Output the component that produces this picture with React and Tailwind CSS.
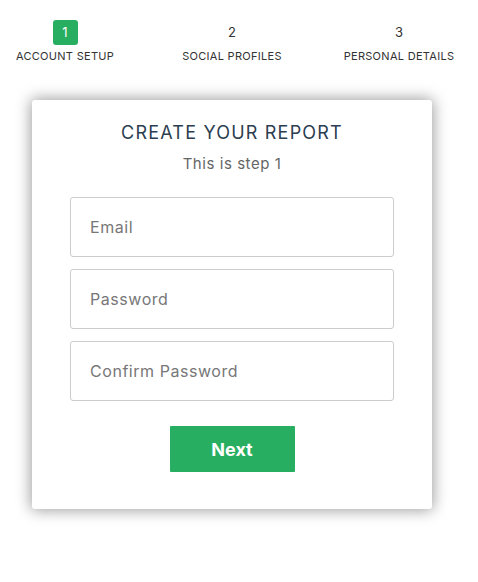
import React from "react";

const steps = [
  { n: 1, label: "ACCOUNT SETUP", active: true },
  { n: 2, label: "SOCIAL PROFILES" },
  { n: 3, label: "PERSONAL DETAILS" },
];

export default function App() {
  return (
    <div className="min-h-[582px] w-[478px] bg-white text-[#333] font-['Inter','Open_Sans',sans-serif]">
      {/* progress steps */}
      <div className="flex gap-[37px] pt-[20px]">
        {steps.map((s) => (
          <div key={s.n} className="flex w-[130px] flex-col items-center">
            <div
              className={
                s.active
                  ? "flex h-[25px] w-[25px] items-center justify-center rounded-[3px] bg-[#27ae60] text-[13px] text-white"
                  : "flex h-[25px] w-[25px] items-center justify-center text-[13px] text-[#333]"
              }
            >
              {s.n}
            </div>
            <div className="mt-[4px] whitespace-nowrap text-[11px] leading-[14px] tracking-[0.3px] text-[#333]">{s.label}</div>
          </div>
        ))}
      </div>

      {/* form card */}
      <div className="ml-[32px] mt-[37px] w-[400px] rounded-[3px] bg-white px-[38px] pb-[37px] pt-[22px] shadow-[0_0_15px_1px_rgba(0,0,0,0.4)]">
        <h2 className="text-center text-[18px] font-normal leading-[22px] tracking-[1.2px] text-[#2c3e50]">CREATE YOUR REPORT</h2>
        <h3 className="mt-[10px] text-center text-[15px] font-normal leading-[20px] tracking-[0.55px] text-[#666]">This is step 1</h3>

        <div className="mt-[23px] flex flex-col gap-[12px]">
          <input
            type="text"
            placeholder="Email"
            className="h-[60px] w-full rounded-[3px] border border-[#ccc] px-[19px] text-[16px] tracking-[0.55px] text-[#2c3e50] outline-none placeholder:text-[#777]"
          />
          <input
            type="password"
            placeholder="Password"
            className="h-[60px] w-full rounded-[3px] border border-[#ccc] px-[19px] text-[16px] tracking-[0.55px] text-[#2c3e50] outline-none placeholder:text-[#777]"
          />
          <input
            type="password"
            placeholder="Confirm Password"
            className="h-[60px] w-full rounded-[3px] border border-[#ccc] px-[19px] text-[16px] tracking-[0.55px] text-[#2c3e50] outline-none placeholder:text-[#777]"
          />
        </div>

        <div className="mt-[25px] flex justify-center">
          <button className="h-[46px] w-[125px] rounded-[1px] bg-[#27ae60] text-[18px] font-bold text-white">Next</button>
        </div>
      </div>
    </div>
  );
}
